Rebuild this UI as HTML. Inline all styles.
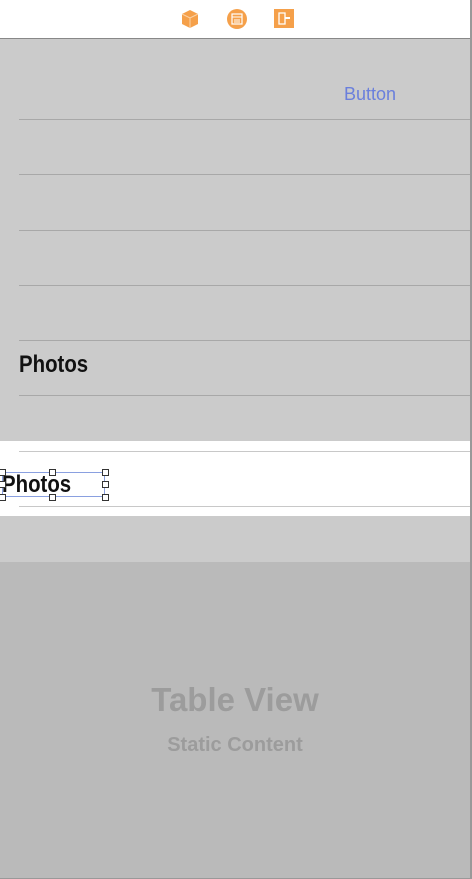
<!DOCTYPE html>
<html><head><style>
body{margin:0;width:472px;height:879px;position:relative;overflow:hidden;font-family:"Liberation Sans",sans-serif;background:#cbcbcb}
.abs{position:absolute}
.line{position:absolute;left:19px;right:0;height:1px;background:#a8a8a8}
.h{position:absolute;width:7px;height:7px;border:1px solid #333;background:#fff;box-sizing:border-box}
</style></head><body>
<div class="abs" style="left:0;top:0;width:470px;height:38px;background:#fff;border-bottom:1px solid #888;border-right:1px solid #888"></div>
<svg class="abs" style="left:180px;top:9px" width="20" height="20"><path d="M2 5 L10 1 L18 5 L18 15 L10 19 L2 15Z" fill="#f5a04a"/><path d="M10 9 L10 19 M2 5 L10 9 L18 5" stroke="#fbd3a8" stroke-width="1" fill="none"/></svg>
<svg class="abs" style="left:226px;top:8px" width="22" height="22"><circle cx="11" cy="11" r="10" fill="#f5a04a"/><rect x="6" y="6" width="10" height="10" fill="none" stroke="#fff" stroke-width="1.2"/><path d="M6 9h10M8 12h6M8 14h6" stroke="#fff"/></svg>
<svg class="abs" style="left:274px;top:9px" width="20" height="19"><rect x="0" y="0" width="20" height="19" fill="#f5a04a"/><path d="M5 4h6v11H5z" fill="none" stroke="#fff" stroke-width="1.3"/><path d="M11 9h5" stroke="#fff" stroke-width="2"/></svg>
<div class="abs" style="left:0;top:39px;width:470px;height:402px;background:#cbcbcb"></div>
<div class="abs" style="left:344px;top:84px;color:#6a7fdc;font-size:18px">Button</div>
<div class="line" style="top:119px"></div>
<div class="line" style="top:174px"></div>
<div class="line" style="top:230px"></div>
<div class="line" style="top:285px"></div>
<div class="line" style="top:340px"></div>
<div class="abs" style="left:19px;top:351px;font-size:24px;font-weight:bold;color:#111;transform:scaleX(0.85);transform-origin:left">Photos</div>
<div class="line" style="top:395px"></div>
<div class="abs" style="left:0;top:441px;width:470px;height:75px;background:#fff"></div>
<div class="line" style="top:451px;background:#c8c8c8"></div>
<div class="line" style="top:506px;background:#c8c8c8"></div>
<div class="abs" style="left:2px;top:472px;width:103px;height:25px;border:1px solid #8aa0e0;box-sizing:border-box"></div>
<div class="abs" style="left:2px;top:471px;font-size:24px;font-weight:bold;color:#111;transform:scaleX(0.85);transform-origin:left">Photos</div>
<div class="h" style="left:-1px;top:469px"></div><div class="h" style="left:49px;top:469px"></div><div class="h" style="left:102px;top:469px"></div>
<div class="h" style="left:-1px;top:481px"></div><div class="h" style="left:102px;top:481px"></div>
<div class="h" style="left:-1px;top:494px"></div><div class="h" style="left:49px;top:494px"></div><div class="h" style="left:102px;top:494px"></div>
<div class="abs" style="left:0;top:516px;width:470px;height:46px;background:#cbcbcb"></div>
<div class="abs" style="left:0;top:562px;width:470px;height:316px;background:#bababa"></div>
<div class="abs" style="left:470px;top:0;width:2px;height:879px;background:#999"></div>
<div class="abs" style="left:0;top:878px;width:472px;height:1px;background:#999"></div>
<div class="abs" style="left:0;width:470px;top:681px;text-align:center;font-size:33px;font-weight:bold;color:#9c9c9c">Table View</div>
<div class="abs" style="left:0;width:470px;top:734px;text-align:center;font-size:20px;font-weight:bold;color:#9c9c9c">Static Content</div>
</body></html>
